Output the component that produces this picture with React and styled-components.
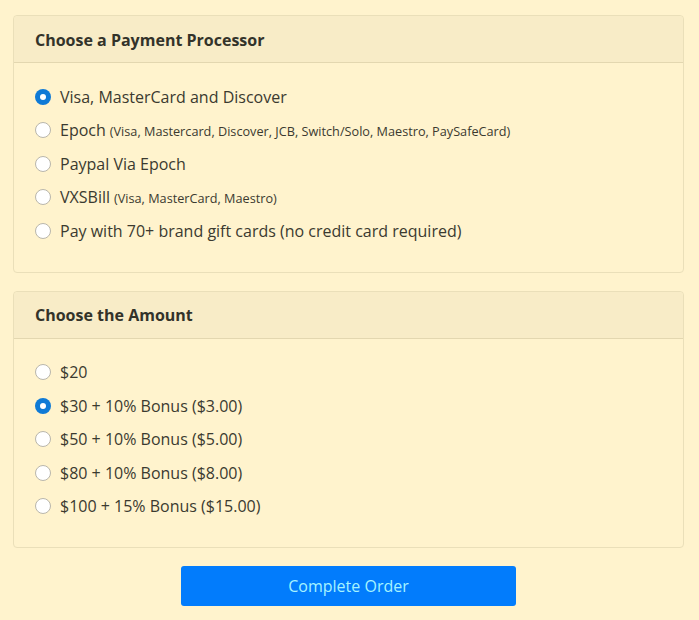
import React, { useState } from "react";
import styled, { createGlobalStyle } from "styled-components";

const GlobalStyle = createGlobalStyle`
  body {
    margin: 0;
    background: #fff3cd;
    font-family: "Open Sans", "Noto Sans", sans-serif;
    color: #3b3a30;
  }
`;

const Page = styled.main`
  padding: 15px 15px 14px 13px;
  display: flex;
  flex-direction: column;
  gap: 18px;
`;

const Card = styled.section`
  border: 1px solid #eadfb9;
  border-radius: 4px;
  background: #fff3cd;
`;

const CardHeader = styled.h2`
  margin: 0;
  height: 47px;
  display: flex;
  align-items: center;
  padding: 1px 21px 0;
  box-sizing: border-box;
  background: #f8ecc7;
  border-bottom: 1px solid #e3d7b0;
  border-radius: 4px 4px 0 0;
  font-size: 16px;
  font-weight: 700;
  color: #33332a;
`;

const CardBody = styled.div`
  padding: 17px 21px 24px;
  display: flex;
  flex-direction: column;
`;

const Option = styled.label`
  height: 33.5px;
  display: flex;
  align-items: center;
  gap: 9px;
  font-size: 16px;
  color: #3b3a30;
  cursor: pointer;
`;

const Radio = styled.span`
  width: 16px;
  height: 16px;
  box-sizing: border-box;
  border-radius: 50%;
  flex: none;
  background: ${(p) => (p.checked ? "#0f7ad6" : "#fff")};
  border: ${(p) => (p.checked ? "none" : "1px solid #b9b6ab")};
  display: flex;
  align-items: center;
  justify-content: center;

  &::after {
    content: "";
    width: 6px;
    height: 6px;
    border-radius: 50%;
    background: #fff;
    display: ${(p) => (p.checked ? "block" : "none")};
  }
`;

const Note = styled.span`
  font-size: 12.7px;
  margin-left: 4px;
`;

const ButtonRow = styled.div`
  display: flex;
  justify-content: center;
`;

const SubmitButton = styled.button`
  width: 335px;
  height: 40px;
  border: none;
  border-radius: 3px;
  background: #027cfc;
  color: #a6f3ff;
  font-family: inherit;
  font-size: 16px;
  cursor: pointer;
`;

const processors = [
  { id: "cc", label: "Visa, MasterCard and Discover" },
  { id: "epoch", label: "Epoch", note: "(Visa, Mastercard, Discover, JCB, Switch/Solo, Maestro, PaySafeCard)" },
  { id: "paypal", label: "Paypal Via Epoch" },
  { id: "vxs", label: "VXSBill", note: "(Visa, MasterCard, Maestro)" },
  { id: "gift", label: "Pay with 70+ brand gift cards (no credit card required)" },
];

const amounts = [
  { id: "20", label: "$20" },
  { id: "30", label: "$30 + 10% Bonus ($3.00)" },
  { id: "50", label: "$50 + 10% Bonus ($5.00)" },
  { id: "80", label: "$80 + 10% Bonus ($8.00)" },
  { id: "100", label: "$100 + 15% Bonus ($15.00)" },
];

function OptionList({ items, value, onChange }) {
  return (
    <CardBody>
      {items.map((item) => (
        <Option key={item.id} onClick={() => onChange(item.id)}>
          <Radio checked={value === item.id} />
          <span>
            {item.label}
            {item.note && <Note>{item.note}</Note>}
          </span>
        </Option>
      ))}
    </CardBody>
  );
}

export default function App() {
  const [processor, setProcessor] = useState("cc");
  const [amount, setAmount] = useState("30");

  return (
    <>
      <GlobalStyle />
      <Page>
        <Card>
          <CardHeader>Choose a Payment Processor</CardHeader>
          <OptionList items={processors} value={processor} onChange={setProcessor} />
        </Card>
        <Card>
          <CardHeader>Choose the Amount</CardHeader>
          <OptionList items={amounts} value={amount} onChange={setAmount} />
        </Card>
        <ButtonRow>
          <SubmitButton>Complete Order</SubmitButton>
        </ButtonRow>
      </Page>
    </>
  );
}
